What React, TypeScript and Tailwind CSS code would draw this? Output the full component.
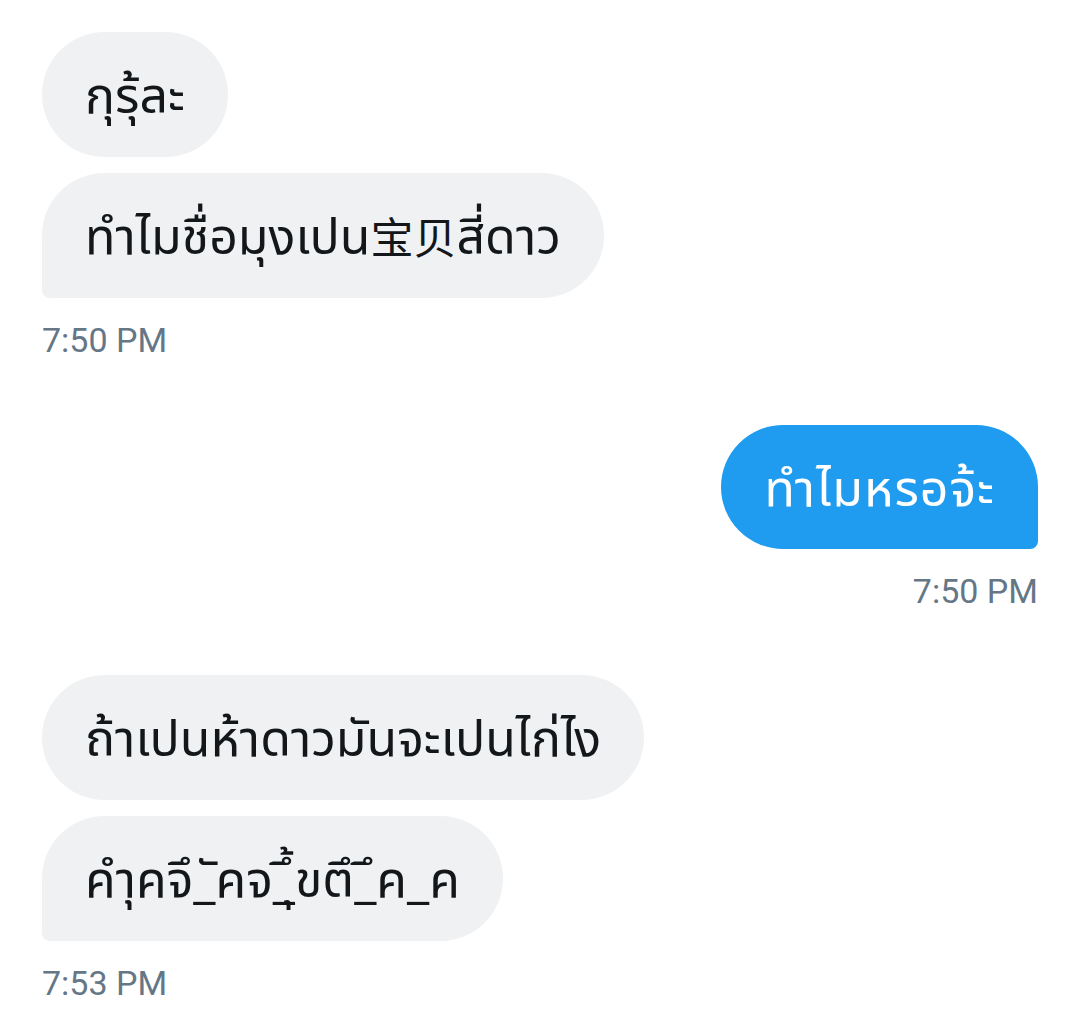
import React from 'react';

type Msg = { text: React.ReactNode };

const thaiFont = "font-['Noto_Sans','Noto_Sans_Thai','Noto_Sans_CJK_SC',sans-serif]";

const Received: React.FC<{ msgs: Msg[]; time: string }> = ({ msgs, time }) => (
  <div className="flex flex-col items-start">
    <div className="flex flex-col items-start gap-[16px]">
      {msgs.map((m, i) => (
        <div
          key={i}
          className={`h-[125px] flex items-center px-[43px] bg-[#eff1f3] text-[#14171a] text-[50px] rounded-[63px] ${thaiFont} ${
            i === msgs.length - 1 ? 'rounded-bl-[8px]' : ''
          }`}
        >
          <span className="whitespace-nowrap">{m.text}</span>
        </div>
      ))}
    </div>
    <div className="mt-[22px] text-[34px] leading-[40px] text-[#657786] font-['Roboto',sans-serif]">{time}</div>
  </div>
);

const Sent: React.FC<{ text: string; time: string }> = ({ text, time }) => (
  <div className="flex flex-col items-end">
    <div
      className={`h-[124px] flex items-center px-[43px] bg-[#1f9bf0] text-white text-[50px] tracking-[1px] rounded-[63px] rounded-br-[8px] ${thaiFont}`}
    >
      <span className="whitespace-nowrap">{text}</span>
    </div>
    <div className="mt-[22px] text-[34px] leading-[40px] text-[#657786] font-['Roboto',sans-serif]">{time}</div>
  </div>
);

export default function App() {
  return (
    <div className="w-[1079px] h-[1036px] bg-white overflow-hidden pl-[42px] pr-[41px] pt-[32px] flex flex-col">
      <Received
        msgs={[
          { text: 'กุรุ้ละ' },
          {
            text: (
              <>
                ทำไมชื่อมุงเปน<span className="text-[43px]">宝贝</span>สี่ดาว
              </>
            ),
          },
        ]}
        time="7:50 PM"
      />
      <div className="mt-[65px]">
        <Sent text="ทำไมหรอจ้ะ" time="7:50 PM" />
      </div>
      <div className="mt-[64px]">
        <Received
          msgs={[{ text: 'ถ้าเปนห้าดาวมันจะเปนไก่ไง' }, { text: 'คำุคจึ_ัคจ_ุึ้ขตึ_ึค_ค' }]}
          time="7:53 PM"
        />
      </div>
    </div>
  );
}
